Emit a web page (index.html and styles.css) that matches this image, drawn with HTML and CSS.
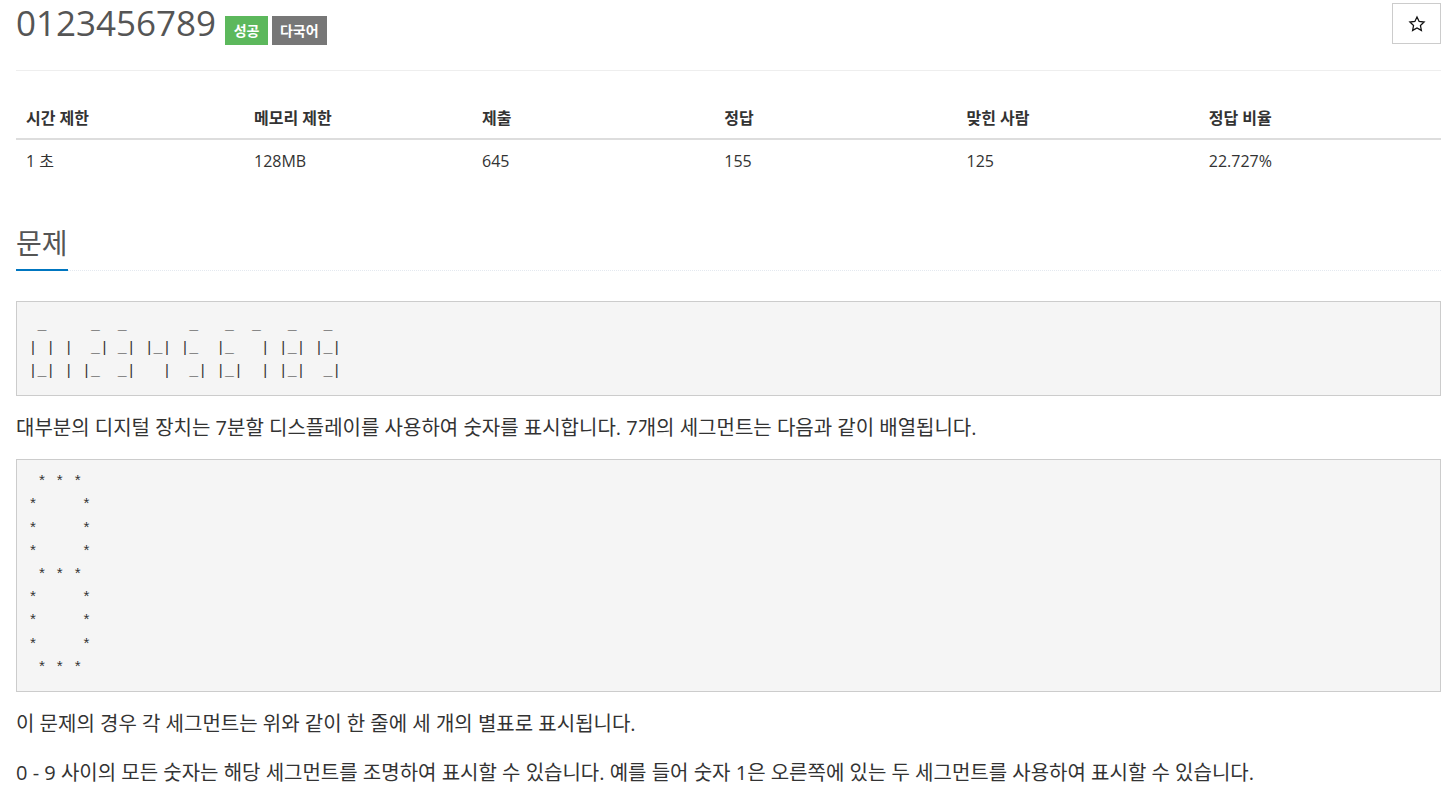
FILE: index.html
```html
<!DOCTYPE html>
<html lang="ko">

<head>
    <meta charset="UTF-8">
    <meta name="viewport" content="width=device-width, initial-scale=1.0">
    <title>0123456789</title>
    <link rel="stylesheet" href="styles.css">
</head>

<body>
    <div class="container">
        <div class="page-header">
            <h1 class="title">0123456789<span class="label label-success">성공</span><span class="label label-gray">다국어</span></h1>
            <button class="star-btn" type="button">
                <svg width="18" height="18" viewBox="0 0 24 24">
                    <path d="M12 2.6l2.85 6.05 6.6.8-4.85 4.55 1.25 6.55L12 17.3l-5.85 3.25 1.25-6.55-4.85-4.55 6.6-.8z" fill="none" stroke="#111" stroke-width="1.7" stroke-linejoin="miter"/>
                </svg>
            </button>
        </div>

        <table class="info-table">
            <thead>
                <tr>
                    <th class="col-narrow">시간 제한</th>
                    <th class="col-narrow">메모리 제한</th>
                    <th>제출</th>
                    <th>정답</th>
                    <th>맞힌 사람</th>
                    <th>정답 비율</th>
                </tr>
            </thead>
            <tbody>
                <tr>
                    <td>1 초</td>
                    <td>128MB</td>
                    <td>645</td>
                    <td>155</td>
                    <td>125</td>
                    <td>22.727%</td>
                </tr>
            </tbody>
        </table>

        <div class="headline">
            <h2>문제</h2>
        </div>

        <div class="problem-text">
<pre> _     _  _       _   _  _   _   _
| | |  _| _| |_| |_  |_   | |_| |_|
|_| | |_  _|   |  _| |_|  | |_|  _|</pre>
            <p>대부분의 디지털 장치는 7분할 디스플레이를 사용하여 숫자를 표시합니다. 7개의 세그먼트는 다음과 같이 배열됩니다.</p>
<pre> * * *
*     *
*     *
*     *
 * * *
*     *
*     *
*     *
 * * *</pre>
            <p>이 문제의 경우 각 세그먼트는 위와 같이 한 줄에 세 개의 별표로 표시됩니다.</p>
            <p>0 - 9 사이의 모든 숫자는 해당 세그먼트를 조명하여 표시할 수 있습니다. 예를 들어 숫자 1은 오른쪽에 있는 두 세그먼트를 사용하여 표시할 수 있습니다.</p>
        </div>
    </div>
</body>

</html>
```

FILE: styles.css
```css
* {
    padding: 0;
    margin: 0;
    box-sizing: border-box;
}

body {
    background-color: #fff;
    color: #333;
    font-family: "Open Sans", "Noto Sans CJK KR", sans-serif;
    font-size: 16px;
}

.container {
    padding: 0 7px 0 16px;
}

/* 제목 */
.page-header {
    display: flex;
    justify-content: space-between;
    align-items: flex-start;
    padding: 3px 0 25px;
    border-bottom: 1px solid #eee;
}

.title {
    font-size: 35px;
    font-weight: normal;
    line-height: 40px;
    color: #555;
}

.label {
    display: inline-block;
    font-size: 14px;
    font-weight: bold;
    line-height: 17px;
    padding: 6px 8.5px;
    color: #fff;
    vertical-align: baseline;
}

.label-success {
    background-color: #5cb85c;
    margin-left: 9px;
}

.label-gray {
    background-color: #777;
    margin-left: 4px;
    padding: 6px 8px;
}

.star-btn {
    width: 49px;
    height: 41px;
    border: 1px solid #ccc;
    background-color: #fff;
    display: flex;
    align-items: center;
    justify-content: center;
}

/* 정보 표 */
.info-table {
    width: 100%;
    margin-top: 26px;
    border-collapse: collapse;
    table-layout: fixed;
}

.info-table th,
.info-table td {
    width: 17%;
    text-align: left;
    padding: 10px 10px;
    line-height: 20px;
}

.info-table th.col-narrow {
    width: 16%;
}

.info-table th {
    font-size: 16px;
    font-weight: bold;
    padding-top: 11px;
    border-bottom: 2px solid #ddd;
}

.info-table td {
    font-size: 16px;
    padding-top: 11px;
}

/* 문제 */
.headline {
    margin-top: 47px;
    border-bottom: 1px dotted #e4e9f0;
}

.headline h2 {
    display: inline-block;
    font-size: 28px;
    font-weight: normal;
    line-height: 30px;
    color: #555;
    padding-bottom: 11px;
    margin-bottom: -1px;
    border-bottom: 2px solid #0076c0;
}

.problem-text {
    margin-top: 30px;
}

.problem-text pre {
    font-family: "Liberation Mono", monospace;
    font-size: 14.9px;
    line-height: 23.2px;
    padding: 11.5px;
    background-color: #f5f5f5;
    border: 1px solid #ccc;
    color: #333;
    margin-bottom: 14px;
}

.problem-text p {
    font-size: 20px;
    line-height: 36px;
    margin-bottom: 13px;
}
```
